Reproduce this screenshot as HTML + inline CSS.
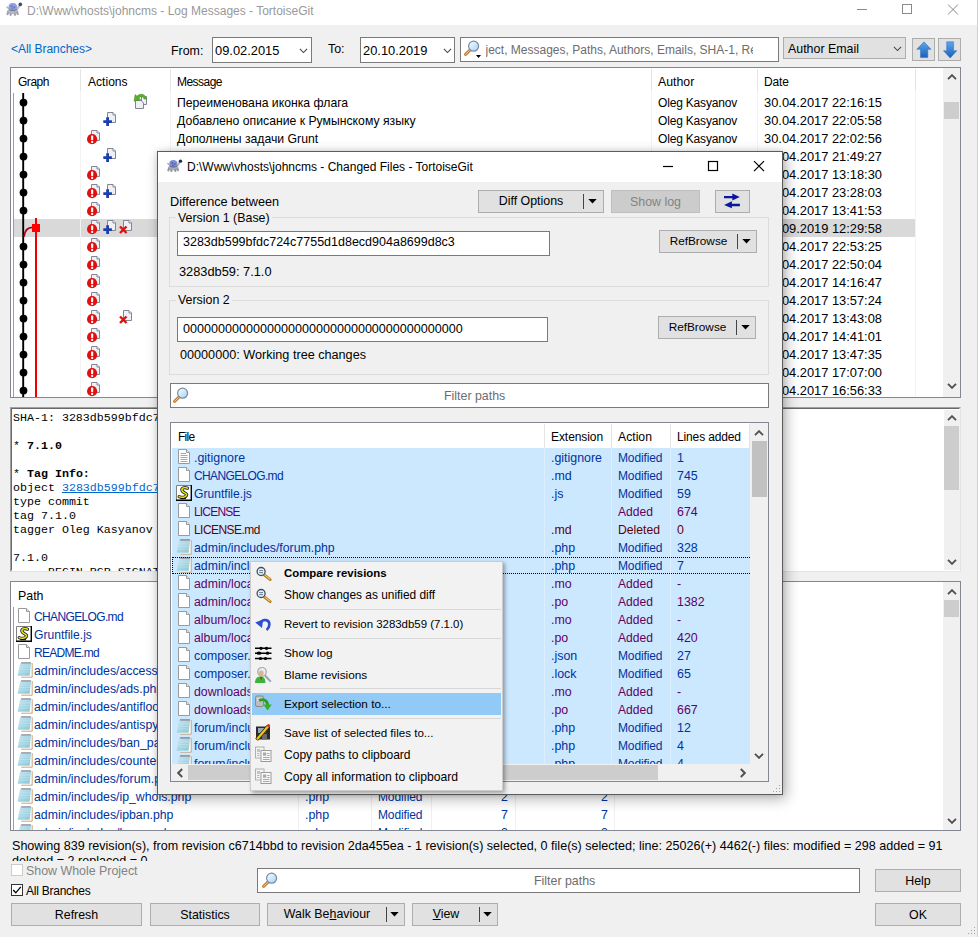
<!DOCTYPE html><html lang="ru"><head><meta charset="utf-8"><title>TortoiseGit Log Messages</title><style>
*{box-sizing:border-box;margin:0;padding:0}
html,body{width:978px;height:937px;overflow:hidden;background:#f0f0f0}
body{position:relative;font-family:"Liberation Sans",sans-serif;font-size:12.4px;color:#000;line-height:18px}
.a{position:absolute}
.t{position:absolute;white-space:nowrap;height:18px;line-height:18px;margin-top:1px}
.seg{font-size:12px}
.btn{position:absolute;background:#e1e1e1;border:1px solid #adadad;text-align:center;white-space:nowrap;padding-top:1px}
.inp{position:absolute;background:#fff;border:1px solid #7a7a7a}
.lst{position:absolute;background:#fff;border:1px solid #828790;overflow:hidden}
.hs{position:absolute;width:1px;background:#e5e5e5}
.sb{position:absolute;background:#f0f0f0}
.th{position:absolute;background:#cdcdcd}
.mod{color:#0032a0}.add{color:#640064}.del{color:#640000}
.mono{font-family:"Liberation Mono",monospace;font-size:11.65px;line-height:14px;white-space:pre;position:absolute;margin-top:1px}
.mi{position:absolute;left:33px;white-space:nowrap;font-size:11.8px;height:18px;line-height:18px;margin-top:1px}
.msep{position:absolute;left:29px;right:1px;height:1px;background:#d7d7d7}
u{text-decoration:underline}
</style></head><body>
<svg width="0" height="0" style="position:absolute"><defs>
<linearGradient id="gb" x1="0" y1="0" x2="1" y2="1"><stop offset="0" stop-color="#c6e6f2"/><stop offset="1" stop-color="#86c6d6"/></linearGradient>
<linearGradient id="gl" x1="0" y1="0" x2="1" y2="1"><stop offset="0" stop-color="#ffffff"/><stop offset="1" stop-color="#9fd0f5"/></linearGradient>
<linearGradient id="ga" x1="0" y1="0" x2="0" y2="1"><stop offset="0" stop-color="#5aa7ea"/><stop offset="1" stop-color="#1c5fb8"/></linearGradient>
<symbol id="pg" viewBox="0 0 12 15"><path d="M0.5 0.5H8.5L11.5 3.5V14.5H0.5Z" fill="#fff" stroke="#9a9a9a"/><path d="M8.5 0.5V3.5H11.5" fill="#e8e8e8" stroke="#9a9a9a"/></symbol>
<symbol id="pgt" viewBox="0 0 12 15"><path d="M0.5 0.5H8.5L11.5 3.5V14.5H0.5Z" fill="#fff" stroke="#9a9a9a"/><path d="M8.5 0.5V3.5H11.5" fill="#e8e8e8" stroke="#9a9a9a"/><path d="M2.5 4.5H8M2.5 6.5H9.5M2.5 8.5H9.5M2.5 10.5H9.5M2.5 12.5H9.5" stroke="#a8a8a8" fill="none"/></symbol>
<symbol id="php" viewBox="0 0 16 16"><path d="M4.3 1.5H15.2V15.2H4.3Z" fill="#fff"/><path d="M15.2 1.2V15.2H4.3" fill="none" stroke="#c49a6c" stroke-width="0.9"/><path d="M3 2H14L12.6 13.7H0.600Z" fill="url(#gb)"/><path d="M2.600 5H13.500M2.200 7.500H13.200M1.900 10H12.900" stroke="#d4eef8" stroke-width=".6" opacity=".7"/><path d="M4 1.700l1-1.400 1 1.400 1-1.400 1 1.400 1-1.400 1 1.400 1-1.400 1 1.400 1-1.400 .8 1.400" stroke="#39414f" stroke-width=".7" fill="none"/></symbol>
<symbol id="js" viewBox="0 0 16 16"><rect x="0" y="0" width="16" height="16" fill="#fff"/><path d="M0.500 15.500V0.500H15" stroke="#808080" fill="none"/><path d="M15.300 0V15.300H0" stroke="#000" stroke-width="1.400" fill="none"/><path d="M11.500 3.200C8.500 1.800 5.200 3 6 5.500S11.500 8 10.500 10.300 5.500 12.800 3.200 11.600" fill="none" stroke="#222" stroke-width="3.200" stroke-linecap="round"/><path d="M11.500 3.200C8.500 1.800 5.200 3 6 5.500S11.500 8 10.500 10.300 5.500 12.800 3.200 11.600" fill="none" stroke="#e6ea10" stroke-width="1.500" stroke-linecap="round"/><path d="M4.500 13.700H10" stroke="#000" stroke-width="1"/></symbol>
<symbol id="spg" viewBox="0 0 9 11"><path d="M0.5 0.5H6L8.5 3V10.5H0.5Z" fill="#eef0f4" stroke="#7f8797"/><path d="M6 0.5V3H8.5" fill="#fff" stroke="#7f8797"/></symbol>
<symbol id="imod" viewBox="0 0 14 16"><use href="#spg" x="4" y="1" width="9" height="11"/><circle cx="5.1" cy="10.2" r="5.1" fill="#e01010"/><rect x="4.1" y="6.6" width="2.1" height="4.6" rx="0.6" fill="#fff"/><rect x="4.1" y="12" width="2.1" height="1.9" rx="0.6" fill="#fff"/></symbol>
<symbol id="iadd" viewBox="0 0 14 16"><use href="#spg" x="4" y="1" width="9" height="11"/><path d="M4.6 6.3V14.9M0.3 10.6H8.9" stroke="#1c3fb0" stroke-width="2.8" fill="none"/></symbol>
<symbol id="idel" viewBox="0 0 14 16"><use href="#spg" x="4" y="1" width="9" height="11"/><path d="M1 7.5L7.5 14M7.5 7.5L1 14" stroke="#e01010" stroke-width="2.4" fill="none"/></symbol>
<symbol id="irev" viewBox="0 0 16 17"><path d="M8.5 3.5H13.5V11.5H8.5Z" fill="#eef0f4" stroke="#7f8797"/><path d="M2.5 7.5H8L10.5 10V15.5H2.5Z" fill="#eef0f4" stroke="#7f8797"/><path d="M13.2 6C13 1.5 7.5 -0.5 4 3.2L2.2 1.6 1 8.2 7.6 6.6 5.8 5C8 2.8 10.5 3.5 11 6Z" fill="#58b02c" stroke="#3c8a1c" stroke-width="0.5"/></symbol>
<symbol id="mag" viewBox="0 0 16 16"><path d="M6.2 9.8L1.600 14.400" stroke="#c8843a" stroke-width="3.1" stroke-linecap="round"/><path d="M6.2 9.8L1.6 14.4" stroke="#f0c070" stroke-width="1" stroke-linecap="round"/><circle cx="9.6" cy="6.2" r="5" fill="url(#gl)" stroke="#7a8aa0" stroke-width="1.2"/></symbol>
<symbol id="mag2" viewBox="0 0 16 16"><path d="M8.6 9.2L14 14.4" stroke="#c8843a" stroke-width="2.6" stroke-linecap="round"/><path d="M8.6 9.2L14 14.4" stroke="#f0c070" stroke-width="1" stroke-linecap="round"/><circle cx="5.6" cy="5.6" r="4.4" fill="url(#gl)" stroke="#7a8aa0" stroke-width="1.2"/><path d="M3.8 4.6H7.2M3.8 6.6H7.2" stroke="#667" stroke-width="0.8"/></symbol>
<symbol id="chv" viewBox="0 0 10 6"><path d="M1 1L5 5L9 1" fill="none" stroke="#444" stroke-width="1.2"/></symbol>
<symbol id="up" viewBox="0 0 10 6"><path d="M1 5.2L5 1.2L9 5.2" fill="none" stroke="#505050" stroke-width="1.9"/></symbol>
<symbol id="dn" viewBox="0 0 10 6"><path d="M1 0.8L5 4.8L9 0.8" fill="none" stroke="#505050" stroke-width="1.9"/></symbol>
<symbol id="lf" viewBox="0 0 6 10"><path d="M5.2 1L1.2 5L5.2 9" fill="none" stroke="#505050" stroke-width="1.9"/></symbol>
<symbol id="rt" viewBox="0 0 6 10"><path d="M0.8 1L4.8 5L0.8 9" fill="none" stroke="#505050" stroke-width="1.9"/></symbol>
<symbol id="tri" viewBox="0 0 10 6"><path d="M0 0H10L5 5.5Z" fill="#000"/></symbol>
<symbol id="tort" viewBox="0 0 18 14"><path d="M1.5 4.5L4.5 7.5" stroke="#9aa0ac" stroke-width="1.2"/><path d="M11.5 8L14.8 3.2" stroke="#a8aebb" stroke-width="2"/><ellipse cx="7.6" cy="9.3" rx="5.6" ry="2.6" fill="#aab0bd"/><path d="M3 10.500l-.5 1.600M5.600 11.500l.1 1.300M9.600 11.500l.4 1.300M12 10.500l.8 1.400" stroke="#8d94a2" stroke-width="2.2" stroke-linecap="round"/><ellipse cx="7.8" cy="5" rx="4.3" ry="3.9" fill="#7e8fd8"/><path d="M5.6 3.6h2v1.6h-2zM8.4 4.6h1.8v1.6H8.4zM6.4 6.2h1.8v1.2H6.4z" fill="#4f5fb0"/><path d="M4 7.8C6 9 10 9 11.8 7.4" stroke="#5a6274" stroke-width="1" fill="none"/><circle cx="15.3" cy="2.4" r="1.8" fill="#1b2a55"/></symbol>
</defs></svg>
<div class="a" style="left:0px;top:0px;width:978px;height:25px;background:#fff;"></div>
<svg class="a" style="left:5px;top:2px;opacity:.85" width="18" height="14"><use href="#tort"/></svg>
<div class="t seg" style="left:27px;top:1px;color:#999">D:\Www\vhosts\johncms - Log Messages - TortoiseGit</div>
<svg class="a" style="left:850px;top:0" width="120" height="25"><path d="M7 9.5H17" stroke="#8a8a8a" fill="none"/><rect x="52.5" y="4.5" width="9" height="9" fill="none" stroke="#8a8a8a"/><path d="M98 4.5L108 14.5M108 4.5L98 14.5" stroke="#8a8a8a" fill="none"/></svg>
<div class="a" style="left:977px;top:0px;width:1px;height:937px;background:#d0d0d0;"></div>
<div class="t " style="left:11px;top:39px;color:#0066cc;font-size:12.00px;letter-spacing:-0.03px;">&lt;All Branches&gt;</div>
<div class="t " style="left:171px;top:41px;">From:</div>
<div class="inp" style="left:212px;top:37px;width:100px;height:25.5px"></div>
<div class="t " style="left:215px;top:41px;font-size:12.86px">09.02.2015</div>
<svg class="a" style="left:299px;top:48px" width="9" height="5.5" ><use href="#chv"/></svg>
<div class="t " style="left:328px;top:39px;">To:</div>
<div class="inp" style="left:360px;top:37px;width:95px;height:25.5px"></div>
<div class="t " style="left:363px;top:41px;font-size:12.86px">20.10.2019</div>
<svg class="a" style="left:443px;top:48px" width="9" height="5.5" ><use href="#chv"/></svg>
<div class="inp" style="left:460px;top:37px;width:318.500px;height:25px"></div>
<svg class="a" style="left:464px;top:40px" width="16" height="16" ><use href="#mag"/></svg>
<svg class="a" style="left:476px;top:55px" width="6" height="4"><path d="M0 0H5L2.5 3Z" fill="#000"/></svg>
<div class="t " style="left:485.5px;top:40px;color:#6d6d6d;width:267px;overflow:hidden;font-size:12px">ject, Messages, Paths, Authors, Emails, SHA-1, Refs, Bug-IDs</div>
<div class="btn" style="left:783px;top:37px;width:123px;height:22px"></div>
<div class="t " style="left:788px;top:39px;">Author Email</div>
<svg class="a" style="left:892.5px;top:46px" width="9" height="5.5" ><use href="#chv"/></svg>
<div class="btn" style="left:912px;top:38px;width:23px;height:23px"></div>
<div class="btn" style="left:938px;top:38px;width:23px;height:23px"></div>
<svg class="a" style="left:915px;top:41px" width="17" height="18"><path d="M9 0.800L16 8.300H12.800V16.600H5.500V8.300H1.800Z" fill="url(#ga)" stroke="#2a6cc0" stroke-width="0.5"/></svg>
<svg class="a" style="left:941px;top:41px" width="17" height="18"><path d="M9.200 17L15.800 9.700H12.600V0.800H5.700V9.700H2.500Z" fill="url(#ga)" stroke="#2a6cc0" stroke-width="0.5"/></svg>
<div class="lst" style="left:10px;top:67px;width:951px;height:331px">
<div class="a" style="left:1.5px;top:151px;width:902.5px;height:18px;background:#d9d9d9;"></div>
<div class="hs" style="left:69px;top:1px;height:22px"></div>
<div class="hs" style="left:69px;top:23px;height:306px;background:#f3f3f3"></div>
<div class="hs" style="left:159px;top:1px;height:22px"></div>
<div class="hs" style="left:159px;top:23px;height:306px;background:#f3f3f3"></div>
<div class="hs" style="left:640px;top:1px;height:22px"></div>
<div class="hs" style="left:640px;top:23px;height:306px;background:#f3f3f3"></div>
<div class="hs" style="left:746px;top:1px;height:22px"></div>
<div class="hs" style="left:746px;top:23px;height:306px;background:#f3f3f3"></div>
<div class="hs" style="left:904px;top:1px;height:22px"></div>
<div class="hs" style="left:904px;top:23px;height:306px;background:#f3f3f3"></div>
<div class="t " style="left:7px;top:4px;font-size:12.00px;letter-spacing:-0.47px;">Graph</div>
<div class="t " style="left:77px;top:4px;font-size:12.08px;">Actions</div>
<div class="t " style="left:166px;top:4px;font-size:12.00px;letter-spacing:-0.53px;">Message</div>
<div class="t " style="left:647px;top:4px;font-size:12.32px;">Author</div>
<div class="t " style="left:753px;top:4px;font-size:12.00px;letter-spacing:-0.14px;">Date</div>
<div class="a" style="left:2px;top:25px;width:1px;height:310px;background:#7da2ce;"></div>
<svg class="a" style="left:0;top:22px" width="70" height="320">
<path d="M12.200 3V320" stroke="#000" stroke-width="1.900" fill="none"/>
<circle cx="12.5" cy="12.6" r="3.900" fill="#000"/>
<circle cx="12.5" cy="30.6" r="3.900" fill="#000"/>
<circle cx="12.5" cy="48.6" r="3.900" fill="#000"/>
<circle cx="12.5" cy="66.6" r="3.900" fill="#000"/>
<circle cx="12.5" cy="84.6" r="3.900" fill="#000"/>
<circle cx="12.5" cy="102.6" r="3.900" fill="#000"/>
<circle cx="12.5" cy="120.6" r="3.900" fill="#000"/>
<circle cx="12.5" cy="156.6" r="3.900" fill="#000"/>
<circle cx="12.5" cy="174.6" r="3.900" fill="#000"/>
<circle cx="12.5" cy="192.6" r="3.900" fill="#000"/>
<circle cx="12.5" cy="210.6" r="3.900" fill="#000"/>
<circle cx="12.5" cy="228.6" r="3.900" fill="#000"/>
<circle cx="12.5" cy="246.6" r="3.900" fill="#000"/>
<circle cx="12.5" cy="264.6" r="3.900" fill="#000"/>
<circle cx="12.5" cy="282.6" r="3.900" fill="#000"/>
<circle cx="12.5" cy="300.6" r="3.900" fill="#000"/>
<circle cx="12.5" cy="318.6" r="3.900" fill="#000"/>
<path d="M25 128V320" stroke="#f00000" stroke-width="2" fill="none"/>
<path d="M21.500 137.300C16 137.300 13.600 140.500 13.100 146.800" stroke="#a80010" stroke-width="1.700" fill="none"/>
<rect x="21" y="134" width="8" height="8" fill="#ff0000"/>
</svg>
<svg class="a" style="left:122px;top:25px" width="16" height="17"><use href="#irev"/></svg>
<div class="t " style="left:166px;top:25px;font-size:12.22px">Переименована иконка флага</div>
<div class="t " style="left:647px;top:25px;font-size:12.00px;letter-spacing:-0.18px;">Oleg Kasyanov</div>
<div class="t " style="left:753px;top:25px;font-size:12.86px">30.04.2017 22:16:15</div>
<svg class="a" style="left:92px;top:43px" width="14" height="16"><use href="#iadd"/></svg>
<div class="t " style="left:166px;top:43px;font-size:12.22px">Добавлено описание к Румынскому языку</div>
<div class="t " style="left:647px;top:43px;font-size:12.00px;letter-spacing:-0.18px;">Oleg Kasyanov</div>
<div class="t " style="left:753px;top:43px;font-size:12.86px">30.04.2017 22:05:58</div>
<svg class="a" style="left:76px;top:61px" width="14" height="16"><use href="#imod"/></svg>
<div class="t " style="left:166px;top:61px;font-size:12.22px">Дополнены задачи Grunt</div>
<div class="t " style="left:647px;top:61px;font-size:12.00px;letter-spacing:-0.18px;">Oleg Kasyanov</div>
<div class="t " style="left:753px;top:61px;font-size:12.86px">30.04.2017 22:02:56</div>
<svg class="a" style="left:92px;top:79px" width="14" height="16"><use href="#iadd"/></svg>
<div class="t " style="left:166px;top:79px;font-size:12.22px">Добавлены новые файлы</div>
<div class="t " style="left:647px;top:79px;font-size:12.00px;letter-spacing:-0.18px;">Oleg Kasyanov</div>
<div class="t " style="left:753px;top:79px;font-size:12.86px">30.04.2017 21:49:27</div>
<svg class="a" style="left:76px;top:97px" width="14" height="16"><use href="#imod"/></svg>
<div class="t " style="left:166px;top:97px;font-size:12.22px">Исправлены ошибки</div>
<div class="t " style="left:647px;top:97px;font-size:12.00px;letter-spacing:-0.18px;">Oleg Kasyanov</div>
<div class="t " style="left:753px;top:97px;font-size:12.86px">29.04.2017 13:18:30</div>
<svg class="a" style="left:76px;top:115px" width="14" height="16"><use href="#imod"/></svg>
<svg class="a" style="left:92px;top:115px" width="14" height="16"><use href="#iadd"/></svg>
<div class="t " style="left:166px;top:115px;font-size:12.22px">Обновлен модуль форума</div>
<div class="t " style="left:647px;top:115px;font-size:12.00px;letter-spacing:-0.18px;">Oleg Kasyanov</div>
<div class="t " style="left:753px;top:115px;font-size:12.86px">28.04.2017 23:28:03</div>
<svg class="a" style="left:76px;top:133px" width="14" height="16"><use href="#imod"/></svg>
<div class="t " style="left:166px;top:133px;font-size:12.22px">Исправлена опечатка</div>
<div class="t " style="left:647px;top:133px;font-size:12.00px;letter-spacing:-0.18px;">Oleg Kasyanov</div>
<div class="t " style="left:753px;top:133px;font-size:12.86px">28.04.2017 13:41:53</div>
<svg class="a" style="left:76px;top:151px" width="14" height="16"><use href="#imod"/></svg>
<svg class="a" style="left:92px;top:151px" width="14" height="16"><use href="#iadd"/></svg>
<svg class="a" style="left:108px;top:151px" width="14" height="16"><use href="#idel"/></svg>
<div class="t " style="left:166px;top:151px;font-size:12.22px">Working tree changes</div>
<div class="t " style="left:647px;top:151px;font-size:12.00px;letter-spacing:-0.18px;">Oleg Kasyanov</div>
<div class="t " style="left:753px;top:151px;font-size:12.86px">12.09.2019 12:29:58</div>
<svg class="a" style="left:76px;top:169px" width="14" height="16"><use href="#imod"/></svg>
<div class="t " style="left:166px;top:169px;font-size:12.22px">Обновлены языки</div>
<div class="t " style="left:647px;top:169px;font-size:12.00px;letter-spacing:-0.18px;">Oleg Kasyanov</div>
<div class="t " style="left:753px;top:169px;font-size:12.86px">27.04.2017 22:53:25</div>
<svg class="a" style="left:76px;top:187px" width="14" height="16"><use href="#imod"/></svg>
<div class="t " style="left:166px;top:187px;font-size:12.22px">Мелкие правки</div>
<div class="t " style="left:647px;top:187px;font-size:12.00px;letter-spacing:-0.18px;">Oleg Kasyanov</div>
<div class="t " style="left:753px;top:187px;font-size:12.86px">27.04.2017 22:50:04</div>
<svg class="a" style="left:76px;top:205px" width="14" height="16"><use href="#imod"/></svg>
<div class="t " style="left:166px;top:205px;font-size:12.22px">Обновлен README</div>
<div class="t " style="left:647px;top:205px;font-size:12.00px;letter-spacing:-0.18px;">Oleg Kasyanov</div>
<div class="t " style="left:753px;top:205px;font-size:12.86px">27.04.2017 14:16:47</div>
<svg class="a" style="left:76px;top:223px" width="14" height="16"><use href="#imod"/></svg>
<div class="t " style="left:166px;top:223px;font-size:12.22px">Исправлен фильтр</div>
<div class="t " style="left:647px;top:223px;font-size:12.00px;letter-spacing:-0.18px;">Oleg Kasyanov</div>
<div class="t " style="left:753px;top:223px;font-size:12.86px">26.04.2017 13:57:24</div>
<svg class="a" style="left:76px;top:241px" width="14" height="16"><use href="#imod"/></svg>
<svg class="a" style="left:108px;top:241px" width="14" height="16"><use href="#idel"/></svg>
<div class="t " style="left:166px;top:241px;font-size:12.22px">Удалены старые файлы</div>
<div class="t " style="left:647px;top:241px;font-size:12.00px;letter-spacing:-0.18px;">Oleg Kasyanov</div>
<div class="t " style="left:753px;top:241px;font-size:12.86px">26.04.2017 13:43:08</div>
<svg class="a" style="left:76px;top:259px" width="14" height="16"><use href="#imod"/></svg>
<div class="t " style="left:166px;top:259px;font-size:12.22px">Обновлен composer</div>
<div class="t " style="left:647px;top:259px;font-size:12.00px;letter-spacing:-0.18px;">Oleg Kasyanov</div>
<div class="t " style="left:753px;top:259px;font-size:12.86px">25.04.2017 14:41:01</div>
<svg class="a" style="left:76px;top:277px" width="14" height="16"><use href="#imod"/></svg>
<div class="t " style="left:166px;top:277px;font-size:12.22px">Рефакторинг</div>
<div class="t " style="left:647px;top:277px;font-size:12.00px;letter-spacing:-0.18px;">Oleg Kasyanov</div>
<div class="t " style="left:753px;top:277px;font-size:12.86px">25.04.2017 13:47:35</div>
<svg class="a" style="left:76px;top:295px" width="14" height="16"><use href="#imod"/></svg>
<div class="t " style="left:166px;top:295px;font-size:12.22px">Правки админки</div>
<div class="t " style="left:647px;top:295px;font-size:12.00px;letter-spacing:-0.18px;">Oleg Kasyanov</div>
<div class="t " style="left:753px;top:295px;font-size:12.86px">24.04.2017 17:07:00</div>
<svg class="a" style="left:76px;top:313px" width="14" height="16"><use href="#imod"/></svg>
<div class="t " style="left:166px;top:313px;font-size:12.22px">Правки профиля</div>
<div class="t " style="left:647px;top:313px;font-size:12.00px;letter-spacing:-0.18px;">Oleg Kasyanov</div>
<div class="t " style="left:753px;top:313px;font-size:12.86px">24.04.2017 16:56:33</div>
<svg class="a" style="left:76px;top:331px" width="14" height="16"><use href="#imod"/></svg>
<div class="t " style="left:166px;top:331px;font-size:12.22px">Правки</div>
<div class="t " style="left:647px;top:331px;font-size:12.00px;letter-spacing:-0.18px;">Oleg Kasyanov</div>
<div class="t " style="left:753px;top:331px;font-size:12.86px">24.04.2017 16:40:00</div>
<div class="sb" style="left:932px;top:0;width:17px;height:329px"></div>
<div class="th" style="left:933px;top:34px;width:15px;height:17px"></div>
<svg class="a" style="left:936px;top:6px" width="10" height="6" ><use href="#up"/></svg>
<svg class="a" style="left:936px;top:315px" width="10" height="6" ><use href="#dn"/></svg>
</div>
<div class="a" style="left:10px;top:407px;width:951px;height:165px;background:#fff;border:1px solid;border-color:#a0a0a0 #e3e3e3 #e3e3e3 #a0a0a0;overflow:hidden">
<div class="a" style="left:0;top:0;right:0;bottom:0;border:1px solid;border-color:#696969 #fff #fff #696969"></div>
<div class="mono" style="left:2px;top:2px">SHA-1: 3283db599bfdc724c7755d1d8ecd904a8699d8c3</div>
<div class="mono" style="left:2px;top:30px">* <b>7.1.0</b></div>
<div class="mono" style="left:2px;top:58px">* <b>Tag Info:</b></div>
<div class="mono" style="left:2px;top:72px">object <span style="color:#0066cc;text-decoration:underline">3283db599bfdc724c7755d1d8ecd904a8699d8c3</span></div>
<div class="mono" style="left:2px;top:86px">type commit</div>
<div class="mono" style="left:2px;top:100px">tag 7.1.0</div>
<div class="mono" style="left:2px;top:114px">tagger Oleg Kasyanov &lt;oleg@johncms.com&gt; 1505210000 +0300</div>
<div class="mono" style="left:2px;top:142px">7.1.0</div>
<div class="mono" style="left:2px;top:156px">-----BEGIN PGP SIGNATURE-----</div>
<div class="sb" style="left:933px;top:2px;width:16px;height:160px"></div>
<div class="th" style="left:933px;top:18px;width:15px;height:64px"></div>
<svg class="a" style="left:936px;top:7px" width="10" height="6" ><use href="#up"/></svg>
<svg class="a" style="left:936px;top:151px" width="10" height="6" ><use href="#dn"/></svg>
</div>
<div class="lst" style="left:10px;top:581px;width:951px;height:250px">
<div class="hs" style="left:287px;top:1px;height:248px;background:#f0f0f0"></div>
<div class="hs" style="left:360px;top:1px;height:248px;background:#f0f0f0"></div>
<div class="hs" style="left:420px;top:1px;height:248px;background:#f0f0f0"></div>
<div class="hs" style="left:504px;top:1px;height:248px;background:#f0f0f0"></div>
<div class="hs" style="left:603px;top:1px;height:248px;background:#f0f0f0"></div>
<div class="t " style="left:7px;top:4px;">Path</div>
<div class="t " style="left:301px;top:4px;">Extension</div>
<div class="t " style="left:366px;top:4px;">Action</div>
<div class="t " style="left:429px;top:4px;">Lines added</div>
<div class="t " style="left:511px;top:4px;">Lines removed</div>
<div class="a" style="left:2px;top:25px;width:1px;height:225px;background:#7da2ce;"></div>
<svg class="a" style="left:7px;top:26px" width="12" height="15" ><use href="#pg"/></svg>
<div class="t mod" style="left:23px;top:25px;font-size:12.00px;letter-spacing:-0.64px;">CHANGELOG.md</div>
<div class="t mod" style="left:294px;top:25px;">.md</div>
<div class="t mod" style="left:367px;top:25px;font-size:12.00px;letter-spacing:-0.13px;">Modified</div>
<div class="t mod" style="left:429px;top:25px;width:68px;text-align:right">745</div>
<div class="t mod" style="left:529px;top:25px;width:68px;text-align:right">12</div>
<svg class="a" style="left:5px;top:44px" width="16" height="16" ><use href="#js"/></svg>
<div class="t mod" style="left:23px;top:43px;font-size:12.11px;">Gruntfile.js</div>
<div class="t mod" style="left:294px;top:43px;">.js</div>
<div class="t mod" style="left:367px;top:43px;font-size:12.00px;letter-spacing:-0.13px;">Modified</div>
<div class="t mod" style="left:429px;top:43px;width:68px;text-align:right">59</div>
<div class="t mod" style="left:529px;top:43px;width:68px;text-align:right">3</div>
<svg class="a" style="left:7px;top:62px" width="12" height="15" ><use href="#pg"/></svg>
<div class="t mod" style="left:23px;top:61px;font-size:12.00px;letter-spacing:-0.71px;">README.md</div>
<div class="t mod" style="left:294px;top:61px;">.md</div>
<div class="t mod" style="left:367px;top:61px;font-size:12.00px;letter-spacing:-0.13px;">Modified</div>
<div class="t mod" style="left:429px;top:61px;width:68px;text-align:right">14</div>
<div class="t mod" style="left:529px;top:61px;width:68px;text-align:right">9</div>
<svg class="a" style="left:6px;top:80px" width="16" height="16" ><use href="#php"/></svg>
<div class="t mod" style="left:23px;top:79px;font-size:12.3px;">admin/includes/access.php</div>
<div class="t mod" style="left:294px;top:79px;">.php</div>
<div class="t mod" style="left:367px;top:79px;font-size:12.00px;letter-spacing:-0.13px;">Modified</div>
<div class="t mod" style="left:429px;top:79px;width:68px;text-align:right">5</div>
<div class="t mod" style="left:529px;top:79px;width:68px;text-align:right">5</div>
<svg class="a" style="left:6px;top:98px" width="16" height="16" ><use href="#php"/></svg>
<div class="t mod" style="left:23px;top:97px;font-size:12.3px;">admin/includes/ads.php</div>
<div class="t mod" style="left:294px;top:97px;">.php</div>
<div class="t mod" style="left:367px;top:97px;font-size:12.00px;letter-spacing:-0.13px;">Modified</div>
<div class="t mod" style="left:429px;top:97px;width:68px;text-align:right">22</div>
<div class="t mod" style="left:529px;top:97px;width:68px;text-align:right">22</div>
<svg class="a" style="left:6px;top:116px" width="16" height="16" ><use href="#php"/></svg>
<div class="t mod" style="left:23px;top:115px;font-size:12.3px;">admin/includes/antiflood.php</div>
<div class="t mod" style="left:294px;top:115px;">.php</div>
<div class="t mod" style="left:367px;top:115px;font-size:12.00px;letter-spacing:-0.13px;">Modified</div>
<div class="t mod" style="left:429px;top:115px;width:68px;text-align:right">4</div>
<div class="t mod" style="left:529px;top:115px;width:68px;text-align:right">4</div>
<svg class="a" style="left:6px;top:134px" width="16" height="16" ><use href="#php"/></svg>
<div class="t mod" style="left:23px;top:133px;font-size:12.3px;">admin/includes/antispy.php</div>
<div class="t mod" style="left:294px;top:133px;">.php</div>
<div class="t mod" style="left:367px;top:133px;font-size:12.00px;letter-spacing:-0.13px;">Modified</div>
<div class="t mod" style="left:429px;top:133px;width:68px;text-align:right">9</div>
<div class="t mod" style="left:529px;top:133px;width:68px;text-align:right">9</div>
<svg class="a" style="left:6px;top:152px" width="16" height="16" ><use href="#php"/></svg>
<div class="t mod" style="left:23px;top:151px;font-size:12.3px;">admin/includes/ban_panel.php</div>
<div class="t mod" style="left:294px;top:151px;">.php</div>
<div class="t mod" style="left:367px;top:151px;font-size:12.00px;letter-spacing:-0.13px;">Modified</div>
<div class="t mod" style="left:429px;top:151px;width:68px;text-align:right">31</div>
<div class="t mod" style="left:529px;top:151px;width:68px;text-align:right">30</div>
<svg class="a" style="left:6px;top:170px" width="16" height="16" ><use href="#php"/></svg>
<div class="t mod" style="left:23px;top:169px;font-size:12.3px;">admin/includes/counters.php</div>
<div class="t mod" style="left:294px;top:169px;">.php</div>
<div class="t mod" style="left:367px;top:169px;font-size:12.00px;letter-spacing:-0.13px;">Modified</div>
<div class="t mod" style="left:429px;top:169px;width:68px;text-align:right">16</div>
<div class="t mod" style="left:529px;top:169px;width:68px;text-align:right">16</div>
<svg class="a" style="left:6px;top:188px" width="16" height="16" ><use href="#php"/></svg>
<div class="t mod" style="left:23px;top:187px;font-size:12.29px;">admin/includes/forum.php</div>
<div class="t mod" style="left:294px;top:187px;">.php</div>
<div class="t mod" style="left:367px;top:187px;font-size:12.00px;letter-spacing:-0.13px;">Modified</div>
<div class="t mod" style="left:429px;top:187px;width:68px;text-align:right">328</div>
<div class="t mod" style="left:529px;top:187px;width:68px;text-align:right">301</div>
<svg class="a" style="left:6px;top:206px" width="16" height="16" ><use href="#php"/></svg>
<div class="t mod" style="left:23px;top:205px;font-size:12.3px;">admin/includes/ip_whois.php</div>
<div class="t mod" style="left:294px;top:205px;">.php</div>
<div class="t mod" style="left:367px;top:205px;font-size:12.00px;letter-spacing:-0.13px;">Modified</div>
<div class="t mod" style="left:429px;top:205px;width:68px;text-align:right">2</div>
<div class="t mod" style="left:529px;top:205px;width:68px;text-align:right">2</div>
<svg class="a" style="left:6px;top:224px" width="16" height="16" ><use href="#php"/></svg>
<div class="t mod" style="left:23px;top:223px;font-size:12.3px;">admin/includes/ipban.php</div>
<div class="t mod" style="left:294px;top:223px;">.php</div>
<div class="t mod" style="left:367px;top:223px;font-size:12.00px;letter-spacing:-0.13px;">Modified</div>
<div class="t mod" style="left:429px;top:223px;width:68px;text-align:right">7</div>
<div class="t mod" style="left:529px;top:223px;width:68px;text-align:right">7</div>
<svg class="a" style="left:6px;top:242px" width="16" height="16" ><use href="#php"/></svg>
<div class="t mod" style="left:23px;top:241px;font-size:12.3px;">admin/includes/karma.php</div>
<div class="t mod" style="left:294px;top:241px;">.php</div>
<div class="t mod" style="left:367px;top:241px;font-size:12.00px;letter-spacing:-0.13px;">Modified</div>
<div class="t mod" style="left:429px;top:241px;width:68px;text-align:right">3</div>
<div class="t mod" style="left:529px;top:241px;width:68px;text-align:right">3</div>
<div class="sb" style="left:932px;top:0;width:17px;height:248px"></div>
<div class="th" style="left:933px;top:18px;width:15px;height:17px"></div>
<svg class="a" style="left:936px;top:7px" width="10" height="6" ><use href="#up"/></svg>
<svg class="a" style="left:936px;top:236px" width="10" height="6" ><use href="#dn"/></svg>
</div>
<div class="a" style="left:12px;top:837px;width:950px;height:23.5px;overflow:hidden;white-space:normal;line-height:15px;font-size:12.57px;padding-top:1.95px">Showing 839 revision(s), from revision c6714bbd to revision 2da455ea - 1 revision(s) selected, 0 file(s) selected; line: 25026(+) 4462(-) files: modified = 298 added = 91 deleted = 2 replaced = 0</div>
<div class="a" style="left:11px;top:864px;width:12px;height:12px;background:#fff;border:1px solid #ccc"></div>
<div class="t " style="left:26px;top:861px;color:#838383">Show Whole Project</div>
<div class="a" style="left:11px;top:884px;width:12px;height:12px;background:#fff;border:1px solid #333"></div>
<svg class="a" style="left:11px;top:884px" width="12" height="12"><path d="M2.2 6L4.8 8.8L9.8 2.8" fill="none" stroke="#000" stroke-width="1.3"/></svg>
<div class="t " style="left:26px;top:881px;font-size:12.00px;letter-spacing:-0.24px;">All Branches</div>
<div class="inp" style="left:257px;top:868px;width:603px;height:25px"></div>
<svg class="a" style="left:262px;top:872px" width="16" height="16" ><use href="#mag"/></svg>
<div class="t " style="left:534px;top:871px;color:#6d6d6d">Filter paths</div>
<div class="btn" style="left:875px;top:869px;width:86px;height:23px;line-height:21px">
Help
</div>
<div class="btn" style="left:11px;top:903px;width:131px;height:23px;line-height:21px">
Refresh
</div>
<div class="btn" style="left:150px;top:903px;width:110px;height:23px;line-height:21px">
Statistics
</div>
<div class="btn" style="left:267px;top:903px;width:138px;height:23px;line-height:21px">
<div class="a" style="left:0;top:0;width:118px;height:21px;text-align:center">Walk Be<u>h</u>aviour</div>
<div class="a" style="left:118px;top:3px;width:1px;height:15px;background:#444"></div>
<svg class="a" style="left:122px;top:8px" width="9" height="5"><use href="#tri"/></svg>
</div>
<div class="btn" style="left:412px;top:903px;width:86px;height:23px;line-height:21px">
<div class="a" style="left:0;top:0;width:66px;height:21px;text-align:center"><u>V</u>iew</div>
<div class="a" style="left:66px;top:3px;width:1px;height:15px;background:#444"></div>
<svg class="a" style="left:70px;top:8px" width="9" height="5"><use href="#tri"/></svg>
</div>
<div class="btn" style="left:875px;top:903px;width:86px;height:23px;line-height:21px">
OK
</div>
<svg class="a" style="left:966px;top:926px" width="10" height="10"><path d="M8 1h1v1h-1zM5 4h1v1h-1zM8 4h1v1h-1zM2 7h1v1h-1zM5 7h1v1h-1zM8 7h1v1h-1z" fill="#a0a0a0"/></svg>
<div class="a" style="left:157px;top:151px;width:626px;height:644px;background:#f0f0f0;border:1px solid #5c5c5c;box-shadow:3px 4px 13px rgba(0,0,0,.3),0 0 5px rgba(0,0,0,.12)">
<div class="a" style="left:0px;top:0px;width:624px;height:30px;background:#fff;"></div>
<svg class="a" style="left:8px;top:6px" width="17" height="15"><use href="#tort"/></svg>
<div class="t seg" style="left:29px;top:5px;">D:\Www\vhosts\johncms - Changed Files - TortoiseGit</div>
<svg class="a" style="left:502px;top:5px" width="120" height="20"><path d="M3 9.5H13" stroke="#000" fill="none" stroke-width="1.2"/><rect x="48.5" y="4.5" width="9" height="9" fill="none" stroke="#000" stroke-width="1.2"/><path d="M94 4.2L104 14.2M104 4.2L94 14.2" stroke="#000" fill="none" stroke-width="1.2"/></svg>
<div class="t " style="left:12px;top:40px;font-size:12.70px;">Difference between</div>
<div class="btn" style="left:320px;top:38px;width:126px;height:23px;line-height:21px"><div class="a" style="left:0;top:0;width:104px">Diff Options</div><div class="a" style="left:104px;top:3px;width:1px;height:15px;background:#444"></div><svg class="a" style="left:109px;top:8px" width="9" height="5"><use href="#tri"/></svg></div>
<div class="btn" style="left:453px;top:38px;width:89px;height:23px;line-height:21px;background:#ccc;border-color:#bfbfbf;color:#838383">Show log</div>
<div class="btn" style="left:557px;top:38px;width:35px;height:23px"></div>
<svg class="a" style="left:565px;top:41px" width="18" height="16"><path d="M1 4.100H10M8 12H16.900" stroke="#0a189a" stroke-width="2.300" fill="none"/><path d="M9.300 0.600L16.800 4.100L9.300 7.600Z" fill="#0a189a"/><path d="M8.900 8.300L1.100 12L8.900 15.300Z" fill="#0a189a"/></svg>
<div class="a" style="left:11px;top:65px;width:600px;height:70px;border:1px solid #dcdcdc"></div>
<div class="t" style="left:18px;top:56px;background:#f0f0f0;padding:0 2px">Version 1 (Base)</div>
<div class="a" style="left:11px;top:148px;width:600px;height:75px;border:1px solid #dcdcdc"></div>
<div class="t" style="left:18px;top:138px;background:#f0f0f0;padding:0 2px">Version 2</div>
<div class="inp" style="left:19px;top:79px;width:373px;height:24.5px"></div>
<div class="t " style="left:25px;top:80px;font-size:12.5px">3283db599bfdc724c7755d1d8ecd904a8699d8c3</div>
<div class="t " style="left:21px;top:110px;font-size:12.8px">3283db59: 7.1.0</div>
<div class="inp" style="left:19px;top:165px;width:371px;height:25px"></div>
<div class="t " style="left:25px;top:167px;font-size:12.58px">0000000000000000000000000000000000000000</div>
<div class="t " style="left:22px;top:193px;font-size:12.65px">00000000: Working tree changes</div>
<div class="btn" style="left:501px;top:78px;width:98px;height:23px;line-height:21px"><div class="a" style="left:0;top:0;width:77px"><span style="font-size:11.8px">RefBrowse</span></div><div class="a" style="left:77px;top:3px;width:1px;height:15px;background:#444"></div><svg class="a" style="left:82px;top:8px" width="9" height="5"><use href="#tri"/></svg></div>
<div class="btn" style="left:500px;top:164px;width:98px;height:23px;line-height:21px"><div class="a" style="left:0;top:0;width:77px"><span style="font-size:11.8px">RefBrowse</span></div><div class="a" style="left:77px;top:3px;width:1px;height:15px;background:#444"></div><svg class="a" style="left:82px;top:8px" width="9" height="5"><use href="#tri"/></svg></div>
<div class="inp" style="left:12px;top:231px;width:599px;height:25px"></div>
<svg class="a" style="left:15px;top:235px" width="16" height="16" ><use href="#mag"/></svg>
<div class="t " style="left:286px;top:234px;color:#6d6d6d">Filter paths</div>
<div class="lst" style="left:12px;top:270px;width:599px;height:360px">
<div class="a" style="left:1px;top:25px;width:578px;height:316px;background:#cce8ff;"></div>
<div class="hs" style="left:373px;top:1px;height:24px"></div>
<div class="hs" style="left:373px;top:25px;height:316px;background:rgba(255,255,255,.3)"></div>
<div class="hs" style="left:440px;top:1px;height:24px"></div>
<div class="hs" style="left:440px;top:25px;height:316px;background:rgba(255,255,255,.3)"></div>
<div class="hs" style="left:499px;top:1px;height:24px"></div>
<div class="hs" style="left:499px;top:25px;height:316px;background:rgba(255,255,255,.3)"></div>
<div class="hs" style="left:578px;top:1px;height:24px"></div>
<div class="t " style="left:7px;top:4px;font-size:12.00px;letter-spacing:-0.71px;">File</div>
<div class="t " style="left:380px;top:4px;font-size:12.00px;letter-spacing:-0.07px;">Extension</div>
<div class="t " style="left:447px;top:4px;font-size:12.23px;">Action</div>
<div class="t " style="left:506px;top:4px;font-size:12.00px;letter-spacing:-0.14px;">Lines added</div>
<svg class="a" style="left:7px;top:26px" width="12" height="15" ><use href="#pgt"/></svg>
<div class="t mod" style="left:23px;top:25px;font-size:12.42px;">.gitignore</div>
<div class="t mod" style="left:380px;top:25px;">.gitignore</div>
<div class="t mod" style="left:447px;top:25px;font-size:12.00px;letter-spacing:-0.13px;">Modified</div>
<div class="t mod" style="left:506px;top:25px;">1</div>
<svg class="a" style="left:7px;top:44px" width="12" height="15" ><use href="#pg"/></svg>
<div class="t mod" style="left:23px;top:43px;font-size:12.00px;letter-spacing:-0.64px;">CHANGELOG.md</div>
<div class="t mod" style="left:380px;top:43px;">.md</div>
<div class="t mod" style="left:447px;top:43px;font-size:12.00px;letter-spacing:-0.13px;">Modified</div>
<div class="t mod" style="left:506px;top:43px;">745</div>
<svg class="a" style="left:5px;top:62px" width="16" height="16" ><use href="#js"/></svg>
<div class="t mod" style="left:23px;top:61px;font-size:12.11px;">Gruntfile.js</div>
<div class="t mod" style="left:380px;top:61px;">.js</div>
<div class="t mod" style="left:447px;top:61px;font-size:12.00px;letter-spacing:-0.13px;">Modified</div>
<div class="t mod" style="left:506px;top:61px;">59</div>
<svg class="a" style="left:7px;top:80px" width="12" height="15" ><use href="#pg"/></svg>
<div class="t add" style="left:23px;top:79px;font-size:12.00px;letter-spacing:-0.82px;">LICENSE</div>
<div class="t add" style="left:380px;top:79px;"></div>
<div class="t add" style="left:447px;top:79px;font-size:12.07px;">Added</div>
<div class="t add" style="left:506px;top:79px;">674</div>
<svg class="a" style="left:7px;top:98px" width="12" height="15" ><use href="#pg"/></svg>
<div class="t del" style="left:23px;top:97px;font-size:12.00px;letter-spacing:-0.56px;">LICENSE.md</div>
<div class="t del" style="left:380px;top:97px;">.md</div>
<div class="t del" style="left:447px;top:97px;font-size:12.21px;">Deleted</div>
<div class="t del" style="left:506px;top:97px;">0</div>
<svg class="a" style="left:5px;top:116px" width="16" height="16" ><use href="#php"/></svg>
<div class="t mod" style="left:23px;top:115px;font-size:12.29px;">admin/includes/forum.php</div>
<div class="t mod" style="left:380px;top:115px;">.php</div>
<div class="t mod" style="left:447px;top:115px;font-size:12.00px;letter-spacing:-0.13px;">Modified</div>
<div class="t mod" style="left:506px;top:115px;">328</div>
<svg class="a" style="left:5px;top:134px" width="16" height="16" ><use href="#php"/></svg>
<div class="t mod" style="left:23px;top:133px;font-size:12.3px;">admin/includes/usr_search_nick.php</div>
<div class="t mod" style="left:380px;top:133px;">.php</div>
<div class="t mod" style="left:447px;top:133px;font-size:12.00px;letter-spacing:-0.13px;">Modified</div>
<div class="t mod" style="left:506px;top:133px;">7</div>
<svg class="a" style="left:7px;top:152px" width="12" height="15" ><use href="#pg"/></svg>
<div class="t add" style="left:23px;top:151px;font-size:12.3px;">admin/locale/ro/default.mo</div>
<div class="t add" style="left:380px;top:151px;">.mo</div>
<div class="t add" style="left:447px;top:151px;font-size:12.07px;">Added</div>
<div class="t add" style="left:506px;top:151px;">-</div>
<svg class="a" style="left:7px;top:170px" width="12" height="15" ><use href="#pg"/></svg>
<div class="t add" style="left:23px;top:169px;font-size:12.3px;">admin/locale/ro/default.po</div>
<div class="t add" style="left:380px;top:169px;">.po</div>
<div class="t add" style="left:447px;top:169px;font-size:12.07px;">Added</div>
<div class="t add" style="left:506px;top:169px;">1382</div>
<svg class="a" style="left:7px;top:188px" width="12" height="15" ><use href="#pg"/></svg>
<div class="t add" style="left:23px;top:187px;font-size:12.3px;">album/locale/ro/default.mo</div>
<div class="t add" style="left:380px;top:187px;">.mo</div>
<div class="t add" style="left:447px;top:187px;font-size:12.07px;">Added</div>
<div class="t add" style="left:506px;top:187px;">-</div>
<svg class="a" style="left:7px;top:206px" width="12" height="15" ><use href="#pg"/></svg>
<div class="t add" style="left:23px;top:205px;font-size:12.3px;">album/locale/ro/default.po</div>
<div class="t add" style="left:380px;top:205px;">.po</div>
<div class="t add" style="left:447px;top:205px;font-size:12.07px;">Added</div>
<div class="t add" style="left:506px;top:205px;">420</div>
<svg class="a" style="left:7px;top:224px" width="12" height="15" ><use href="#pg"/></svg>
<div class="t mod" style="left:23px;top:223px;font-size:12.3px;">composer.json</div>
<div class="t mod" style="left:380px;top:223px;">.json</div>
<div class="t mod" style="left:447px;top:223px;font-size:12.00px;letter-spacing:-0.13px;">Modified</div>
<div class="t mod" style="left:506px;top:223px;">27</div>
<svg class="a" style="left:7px;top:242px" width="12" height="15" ><use href="#pg"/></svg>
<div class="t mod" style="left:23px;top:241px;font-size:12.3px;">composer.lock</div>
<div class="t mod" style="left:380px;top:241px;">.lock</div>
<div class="t mod" style="left:447px;top:241px;font-size:12.00px;letter-spacing:-0.13px;">Modified</div>
<div class="t mod" style="left:506px;top:241px;">65</div>
<svg class="a" style="left:7px;top:260px" width="12" height="15" ><use href="#pg"/></svg>
<div class="t add" style="left:23px;top:259px;font-size:12.3px;">downloads/locale/ro/default.mo</div>
<div class="t add" style="left:380px;top:259px;">.mo</div>
<div class="t add" style="left:447px;top:259px;font-size:12.07px;">Added</div>
<div class="t add" style="left:506px;top:259px;">-</div>
<svg class="a" style="left:7px;top:278px" width="12" height="15" ><use href="#pg"/></svg>
<div class="t add" style="left:23px;top:277px;font-size:12.3px;">downloads/locale/ro/default.po</div>
<div class="t add" style="left:380px;top:277px;">.po</div>
<div class="t add" style="left:447px;top:277px;font-size:12.07px;">Added</div>
<div class="t add" style="left:506px;top:277px;">667</div>
<svg class="a" style="left:5px;top:296px" width="16" height="16" ><use href="#php"/></svg>
<div class="t mod" style="left:23px;top:295px;font-size:12.3px;">forum/includes/addfile.php</div>
<div class="t mod" style="left:380px;top:295px;">.php</div>
<div class="t mod" style="left:447px;top:295px;font-size:12.00px;letter-spacing:-0.13px;">Modified</div>
<div class="t mod" style="left:506px;top:295px;">12</div>
<svg class="a" style="left:5px;top:314px" width="16" height="16" ><use href="#php"/></svg>
<div class="t mod" style="left:23px;top:313px;font-size:12.3px;">forum/includes/addvote.php</div>
<div class="t mod" style="left:380px;top:313px;">.php</div>
<div class="t mod" style="left:447px;top:313px;font-size:12.00px;letter-spacing:-0.13px;">Modified</div>
<div class="t mod" style="left:506px;top:313px;">4</div>
<svg class="a" style="left:5px;top:332px" width="16" height="16" ><use href="#php"/></svg>
<div class="t mod" style="left:23px;top:331px;font-size:12.3px;">forum/includes/close.php</div>
<div class="t mod" style="left:380px;top:331px;">.php</div>
<div class="t mod" style="left:447px;top:331px;font-size:12.00px;letter-spacing:-0.13px;">Modified</div>
<div class="t mod" style="left:506px;top:331px;">4</div>
<div class="a" style="left:1px;top:134px;width:578px;height:17px;border-top:1px dotted #000;border-bottom:1px dotted #000;border-left:1px dotted #000"></div>
<div class="sb" style="left:579px;top:0;width:18px;height:341px"></div>
<div class="th" style="left:581px;top:18px;width:15px;height:56px;background:#c1c1c1"></div>
<svg class="a" style="left:583px;top:7px" width="10" height="6" ><use href="#up"/></svg>
<svg class="a" style="left:583px;top:330px" width="10" height="6" ><use href="#dn"/></svg>
<div class="sb" style="left:0;top:341px;width:597px;height:17px"></div>
<div class="th" style="left:17px;top:342px;width:470px;height:15px"></div>
<svg class="a" style="left:6px;top:345px" width="6" height="10" ><use href="#lf"/></svg>
<svg class="a" style="left:569px;top:345px" width="6" height="10" ><use href="#rt"/></svg>
</div>
<svg class="a" style="left:613px;top:632px" width="10" height="10"><path d="M8 1h1v1h-1zM5 4h1v1h-1zM8 4h1v1h-1zM2 7h1v1h-1zM5 7h1v1h-1zM8 7h1v1h-1z" fill="#a0a0a0"/></svg>
</div>
<div class="a" style="left:250px;top:561px;width:253px;height:230px;background:#f2f2f2;border:1px solid #ccc;box-shadow:2px 2px 4px rgba(0,0,0,.35)">
<div class="a" style="left:1px;top:131px;width:249px;height:22px;background:#91c9f7;"></div>
<div class="mi" style="top:1px"><b style="font-size:11.4px">Compare revisions</b></div>
<div class="mi" style="top:23px;font-size:11.9px">Show changes as unified diff</div>
<div class="mi" style="top:52px;font-size:11.45px">Revert to revision 3283db59 (7.1.0)</div>
<div class="mi" style="top:81px;font-size:11.8px">Show log</div>
<div class="mi" style="top:103px;font-size:11.8px">Blame revisions</div>
<div class="mi" style="top:132px;font-size:11.8px">Export selection to...</div>
<div class="mi" style="top:161px;font-size:11.6px">Save list of selected files to...</div>
<div class="mi" style="top:183px;font-size:12.05px">Copy paths to clipboard</div>
<div class="mi" style="top:205px;font-size:12.2px">Copy all information to clipboard</div>
<div class="msep" style="top:47px"></div>
<div class="msep" style="top:76px"></div>
<div class="msep" style="top:126px"></div>
<div class="msep" style="top:156px"></div>
<svg class="a" style="left:4px;top:2px" width="18" height="18"><path d="M9 10.6L15.2 15.6" stroke="#b5762a" stroke-width="2.8" stroke-linecap="round"/><path d="M9.4 10.6L15 15.2" stroke="#f2c45a" stroke-width="1.1" stroke-linecap="round"/><circle cx="6.1" cy="7.5" r="4" fill="#e6f3fb" stroke="#3f4f60" stroke-width="1.3"/><path d="M4.2 6.6H8M4.2 8.6H8" stroke="#5a6a7a" stroke-width=".9"/></svg>
<svg class="a" style="left:4px;top:24px" width="18" height="18"><path d="M9 10.6L15.2 15.6" stroke="#b5762a" stroke-width="2.8" stroke-linecap="round"/><path d="M9.4 10.6L15 15.2" stroke="#f2c45a" stroke-width="1.1" stroke-linecap="round"/><circle cx="6.1" cy="7.5" r="4" fill="#e6f3fb" stroke="#3f4f60" stroke-width="1.3"/><path d="M4.2 6.6H8M4.2 8.6H8" stroke="#5a6a7a" stroke-width=".9"/></svg>
<svg class="a" style="left:3px;top:54px" width="18" height="16"><path d="M6.5 7.2C9 2.2 15.8 3.4 15.3 9C15.1 11.6 14 13 12.6 14" fill="none" stroke="#2a4fd0" stroke-width="2.7"/><path d="M1.2 6.4L9 3.4 8 12Z" fill="#2a4fd0"/></svg>
<svg class="a" style="left:4px;top:83px" width="17" height="16"><path d="M0 3.3H16.5M0 8.2H16.5M0 13.5H16.5" stroke="#000" stroke-width="1.5"/><g fill="#000"><ellipse cx="6" cy="3.3" rx="1.7" ry="1.6"/><ellipse cx="11.5" cy="3.3" rx="1.7" ry="1.6"/><ellipse cx="4" cy="8.2" rx="2.4" ry="1.6"/><ellipse cx="12.5" cy="8.2" rx="1.7" ry="1.6"/><ellipse cx="5.5" cy="13.5" rx="1.7" ry="1.6"/><ellipse cx="10.5" cy="13.5" rx="1.7" ry="1.6"/></g></svg>
<svg class="a" style="left:3px;top:104px" width="18" height="18"><path d="M11 9.5L16.8 15.6" stroke="#9aa0b4" stroke-width="2"/><circle cx="8" cy="5.8" r="4.3" fill="#ececec" stroke="#a8a8a8" stroke-width="1.2"/><circle cx="7.2" cy="7" r="2.5" fill="#dcb48c"/><path d="M1 17C1 12.4 3.6 10.6 6.6 10.6S11.4 12.4 11.4 17Z" fill="#3cb43a"/><path d="M6 11L7.2 14.5 8.2 11Z" fill="#d02020"/></svg>
<svg class="a" style="left:3px;top:132px" width="18" height="18"><rect x="1.5" y="2" width="8" height="10.5" rx="1.5" fill="#bdbdbd" stroke="#8a8a8a"/><rect x="3" y="3.6" width="5" height="3.4" fill="#d8d8d8"/><path d="M5 6.6C9 4.6 13.6 6 13.6 11.5" fill="none" stroke="#2f9e1c" stroke-width="2.8"/><path d="M9.4 10.4H17.8L13.6 16.6Z" fill="#34b31e"/></svg>
<svg class="a" style="left:3px;top:161px" width="18" height="18"><rect x="2" y="3.5" width="14" height="13" fill="#2b2b2b"/><rect x="4" y="5" width="7.5" height="5" fill="#9aa6c4"/><rect x="8" y="11" width="5" height="5.5" fill="#6a6a6a"/><path d="M2.6 16.6L14.4 3" stroke="#3a2a00" stroke-width="3.6"/><path d="M3 16.2L14 3.5" stroke="#ecc81e" stroke-width="2.2"/><circle cx="14.6" cy="2.6" r="1.5" fill="#d83030"/></svg>
<svg class="a" style="left:3px;top:183px" width="18" height="18"><rect x="1.5" y="2" width="8.500" height="11" fill="#f3f3f3" stroke="#b0b0b0"/><path d="M3 4.500H5.500M3 6.500H5.500M3 8.500H5.500M3 10.500H5.500" stroke="#b8b8b8"/><rect x="3" y="4" width="3" height="3" fill="#c4c4c4"/><rect x="7" y="5.5" width="10" height="11" fill="#f8f8f8" stroke="#9c9c9c"/><rect x="9" y="7.500" width="3.2" height="3.200" fill="#a8a8a8"/><path d="M13.200 8.500H15.500M13.200 10.500H15.500M9 12.500H15.500M9 14.500H15.500" stroke="#a8a8a8"/></svg>
<svg class="a" style="left:3px;top:205px" width="18" height="18"><rect x="1.5" y="2" width="8.500" height="11" fill="#f3f3f3" stroke="#b0b0b0"/><path d="M3 4.500H5.500M3 6.500H5.500M3 8.500H5.500M3 10.500H5.500" stroke="#b8b8b8"/><rect x="3" y="4" width="3" height="3" fill="#c4c4c4"/><rect x="7" y="5.5" width="10" height="11" fill="#f8f8f8" stroke="#9c9c9c"/><rect x="9" y="7.500" width="3.2" height="3.200" fill="#a8a8a8"/><path d="M13.200 8.500H15.500M13.200 10.500H15.500M9 12.500H15.500M9 14.500H15.500" stroke="#a8a8a8"/></svg>
</div>
</body></html>
